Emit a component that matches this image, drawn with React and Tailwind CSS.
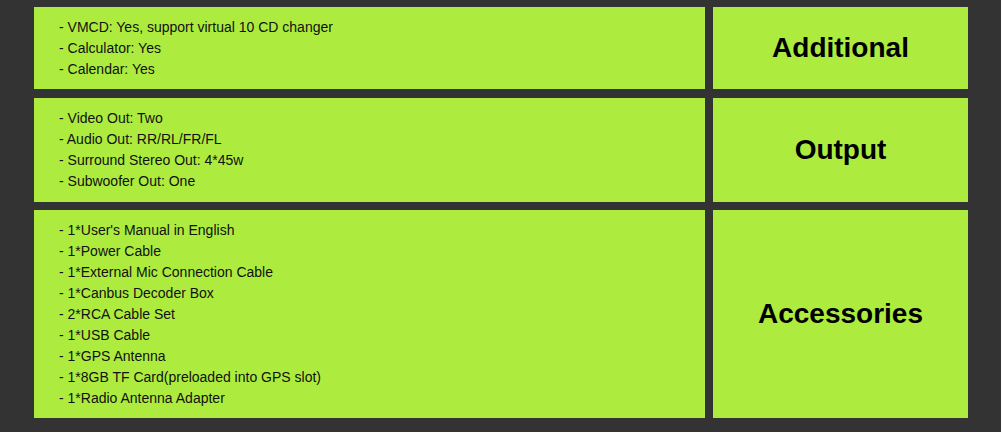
const rows = [
  {
    title: "Additional",
    h: "h-[82px]",
    m: "",
    items: [
      "- VMCD: Yes, support virtual 10 CD changer",
      "- Calculator: Yes",
      "- Calendar: Yes",
    ],
  },
  {
    title: "Output",
    h: "h-[104px]",
    m: "mt-[1px]",
    items: [
      "- Video Out: Two",
      "- Audio Out: RR/RL/FR/FL",
      "- Surround Stereo Out: 4*45w",
      "- Subwoofer Out: One",
    ],
  },
  {
    title: "Accessories",
    h: "h-[208px]",
    m: "",
    items: [
      "- 1*User's Manual in English",
      "- 1*Power Cable",
      "- 1*External Mic Connection Cable",
      "- 1*Canbus Decoder Box",
      "- 2*RCA Cable Set",
      "- 1*USB Cable",
      "- 1*GPS Antenna",
      "- 1*8GB TF Card(preloaded into GPS slot)",
      "- 1*Radio Antenna Adapter",
    ],
  },
];

export default function App() {
  return (
    <div
      className="w-[1001px] h-[432px] bg-[#333333] pl-[34px] pt-[7px] overflow-hidden"
      style={{ fontFamily: '"Liberation Sans", Arial, sans-serif' }}
    >
      <div className="grid grid-cols-[671px_255px] gap-x-[8px] gap-y-[8px]">
        {rows.map((r, i) => (
          <div key={i} className="contents">
            <div
              className={`${r.h} ${r.m} bg-[#adec3e] pl-[25px] flex flex-col justify-center text-[14px] leading-[21px] text-[#111111]`}
            >
              {r.items.map((t, j) => (
                <div key={j}>{t}</div>
              ))}
            </div>
            <div
              className={`${r.h} ${r.m} bg-[#adec3e] flex items-center justify-center text-[28px] font-bold text-black`}
            >
              {r.title}
            </div>
          </div>
        ))}
      </div>
    </div>
  );
}
